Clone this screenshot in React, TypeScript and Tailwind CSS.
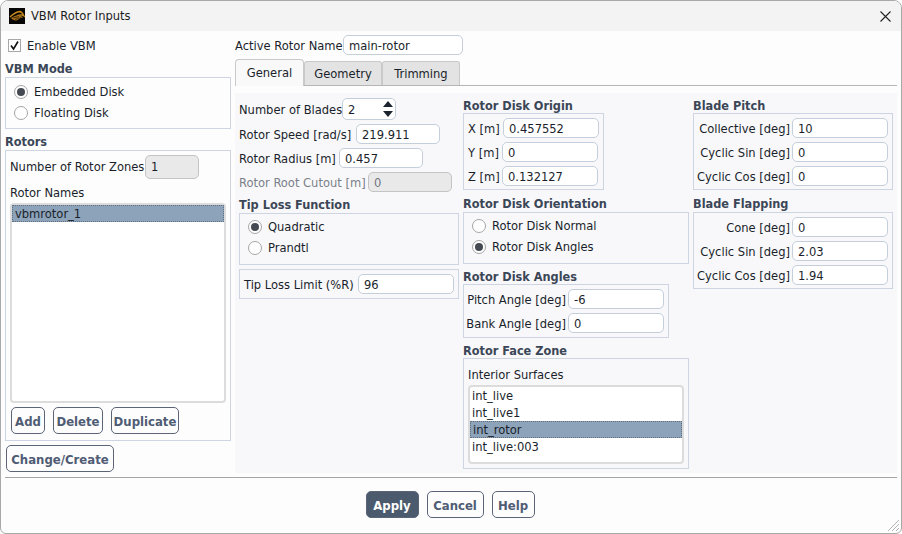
import React from "react";

const inputBase = "h-[20px] rounded-[5px] border border-[#c5cedb] bg-white pl-[5px] pt-[2px] flex items-center text-[#1a1f2b]";

function Input({ value, w = 96, disabled = false }: { value: string; w?: number; disabled?: boolean }) {
  return (
    <div
      style={{ width: w }}
      className={disabled ? "h-[20px] rounded-[5px] border border-[#c4c4c4] bg-[#e9e9e9] pl-[5px] pt-[2px] flex items-center text-[#6f7680] shrink-0" : inputBase + " shrink-0"}
    >
      {value}
    </div>
  );
}

function Heading({ children, low = false }: { children: React.ReactNode; low?: boolean }) {
  return <div className={"h-[16px] leading-[16px] text-[12.6px] font-bold text-[#3b4657] whitespace-nowrap " + (low ? "pt-[1px]" : "")}>{children}</div>;
}

function Group({ w, className = "", children }: { w: number; className?: string; children: React.ReactNode }) {
  return (
    <div style={{ width: w }} className={"border border-[#cdd5e3] " + className}>
      {children}
    </div>
  );
}

function Radio({ label, checked = false }: { label: string; checked?: boolean }) {
  return (
    <div className="flex items-center h-[21px] gap-[6px] whitespace-nowrap">
      <div className="w-[14px] h-[14px] rounded-full border border-[#a5a5a5] bg-white flex items-center justify-center shrink-0">
        {checked && <div className="w-[8px] h-[8px] rounded-full bg-[#454a52]" />}
      </div>
      <span>{label}</span>
    </div>
  );
}

function Field({ label, value }: { label: string; value: string }) {
  return (
    <div className="flex items-center justify-end h-[20px] gap-[2px] whitespace-nowrap">
      <span className="pt-[2px]">{label}</span>
      <Input value={value} />
    </div>
  );
}

function Btn({ label, w, primary = false }: { label: string; w: number; primary?: boolean }) {
  return (
    <div
      style={{ width: w }}
      className={
        "h-[27px] rounded-[5px] border border-[#5b6577] pt-[2px] flex items-center justify-center font-bold text-[13px] " +
        (primary ? "bg-[#4c5a6e] text-white" : "text-[#4f5c74]")
      }
    >
      {label}
    </div>
  );
}

function Logo() {
  return (
    <svg width="16" height="16" viewBox="0 0 16 16" className="shrink-0">
      <rect width="16" height="16" fill="#060503" />
      <path d="M1 9 C4 6 7 4 11 3.5 C13 4 14 6 15 8 C12 6 9 7 7 9" fill="none" stroke="#c98a1e" strokeWidth="1.3" />
      <path d="M2 10 C5 8 8 7 11 7 L14 9.5 C11 10 9 12 7 12.5 C5 12.5 3 11.5 2 10Z" fill="#a8701a" />
      <path d="M4 10 L10 8.5 M6 11.5 L12 9.5" stroke="#2a1a05" strokeWidth="0.8" />
    </svg>
  );
}

function Grip() {
  return (
    <svg width="14" height="14" viewBox="0 0 14 14" className="absolute right-[1px] bottom-[1px]">
      <path d="M13 2 L2 13 M13 6 L6 13 M13 10 L10 13" stroke="#b4b4b4" strokeWidth="1" fill="none" />
    </svg>
  );
}

export default function App() {
  return (
    <div
      className="relative w-[902px] h-[534px] overflow-hidden rounded-t-[8px] rounded-b-[6px] border border-[#a9a9a9] bg-[#fdfdfd] text-[12.8px] leading-[16px] text-[#1a1f2b]"
      style={{ fontFamily: '"DejaVu Sans Condensed", "DejaVu Sans", sans-serif' }}
    >
      {/* Title bar */}
      <div className="h-[30px] bg-[#f3f3f3] flex items-center pl-[8px] pr-[10px] gap-[6px]">
        <Logo />
        <span className="flex-1 text-[#1c1c1c]">VBM Rotor Inputs</span>
        <svg width="11" height="11" viewBox="0 0 11 11">
          <path d="M0.5 0.5 L10.5 10.5 M10.5 0.5 L0.5 10.5" stroke="#222" strokeWidth="1.1" fill="none" />
        </svg>
      </div>

      {/* Main */}
      <div className="flex h-[442px]">
        {/* Left column */}
        <div className="w-[230px] pl-[4px] shrink-0">
          <div className="flex items-center h-[14px] mt-[7px] ml-[3px] gap-[6px]">
            <div className="w-[13px] h-[13px] border border-[#a8a8a8] bg-white flex items-center justify-center">
              <svg width="11" height="11" viewBox="0 0 11 11">
                <path d="M2 5.5 L4.5 9 L9 1.5" stroke="#111" strokeWidth="1.6" fill="none" />
              </svg>
            </div>
            <span className="pt-[2px]">Enable VBM</span>
          </div>
          <div className="mt-[9px]"><Heading>VBM Mode</Heading></div>
          <Group w={226} className="h-[52px] pl-[8px] pt-[3px]">
            <Radio label="Embedded Disk" checked />
            <Radio label="Floating Disk" />
          </Group>
          <div className="mt-[5px]"><Heading>Rotors</Heading></div>
          <Group w={226} className="h-[291px] pl-[4px] pt-[4px]">
            <div className="flex items-center h-[24px] whitespace-nowrap">
              <span className="w-[135px]">Number of Rotor Zones</span>
              <div className="w-[54px] h-[24px] rounded-[5px] border border-[#c4c4c4] bg-[#e9e9e9] pl-[5px] flex items-center">1</div>
            </div>
            <div className="mt-[6px] h-[16px]">Rotor Names</div>
            <div className="mt-[2px] w-[216px] h-[200px] rounded-[4px] border-2 border-[#dcdcdc] bg-white">
              <div className="h-[17px] w-[212px] bg-[#8da3b9] border border-dotted border-[#5f6f80] pl-[2px] flex items-center">vbmrotor_1</div>
            </div>
            <div className="flex mt-[4px] ml-[1px]">
              <Btn label="Add" w={34} />
              <div className="ml-[8px]"><Btn label="Delete" w={50} /></div>
              <div className="ml-[8px]"><Btn label="Duplicate" w={68} /></div>
            </div>
          </Group>
          <div className="mt-[4px] ml-[1px]"><Btn label="Change/Create" w={108} /></div>
        </div>

        {/* Right column */}
        <div className="flex-1 pl-[4px]">
          <div className="flex items-center h-[20px] mt-[4px] whitespace-nowrap">
            <span className="w-[108px] pt-[2px]">Active Rotor Name</span>
            <Input value="main-rotor" w={120} />
          </div>
          <div className="flex items-end h-[27px] mt-[4px] border-b border-[#b5b5b5] w-[662px]">
            <div className="w-[69px] h-[27px] -mb-[1px] rounded-t-[4px] border border-b-0 border-[#c9c9c9] bg-[#f9f9f9] flex items-center justify-center">General</div>
            <div className="w-[78px] h-[24px] rounded-t-[3px] border border-b-0 border-[#c9c9c9] bg-[#e3e3e3] flex items-center justify-center">Geometry</div>
            <div className="w-[78px] h-[24px] rounded-t-[3px] border border-b-0 border-[#c9c9c9] bg-[#e3e3e3] flex items-center justify-center">Trimming</div>
          </div>
          <div className="mt-[7px] w-[662px] h-[380px] bg-[#f8f8fa] flex pl-[4px] gap-[4px]">
            {/* Column 1 */}
            <div className="w-[220px] shrink-0 pt-[5px]">
              <div className="flex items-center h-[22px] whitespace-nowrap">
                <span className="w-[103px] pt-[2px]">Number of Blades</span>
                <div className="w-[54px] h-[22px] rounded-[5px] border border-[#c5cedb] bg-white pl-[5px] pr-[1px] flex items-center justify-between">
                  <span className="pt-[2px]">2</span>
                  <svg width="12" height="18" viewBox="0 0 12 18">
                    <path d="M6 1 L11 7 L1 7Z M6 17 L11 11 L1 11Z" fill="#1d2430" />
                  </svg>
                </div>
              </div>
              <div className="flex items-center h-[20px] mt-[4px] whitespace-nowrap">
                <span className="w-[117px] pt-[2px]">Rotor Speed [rad/s]</span>
                <Input value="219.911" w={84} />
              </div>
              <div className="flex items-center h-[20px] mt-[4px] whitespace-nowrap">
                <span className="w-[100px] pt-[2px]">Rotor Radius [m]</span>
                <Input value="0.457" w={84} />
              </div>
              <div className="flex items-center h-[20px] mt-[4px] whitespace-nowrap text-[#7a8088]">
                <span className="w-[129px] pt-[2px]">Rotor Root Cutout [m]</span>
                <Input value="0" w={84} disabled />
              </div>
              <div className="mt-[4px]"><Heading low>Tip Loss Function</Heading></div>
              <Group w={220} className="h-[52px] pl-[8px] pt-[2px] mt-[1px]">
                <Radio label="Quadratic" checked />
                <Radio label="Prandtl" />
              </Group>
              <Group w={220} className="h-[30px] mt-[4px] pl-[4px] pr-[4px] flex items-center gap-[2px] whitespace-nowrap">
                <span className="flex-1 pt-[2px]">Tip Loss Limit (%R)</span>
                <Input value="96" />
              </Group>
            </div>

            {/* Column 2 */}
            <div className="w-[226px] shrink-0 pt-[4px]">
              <Heading low>Rotor Disk Origin</Heading>
              <Group w={141} className="h-[77px] pl-[4px] pt-[4px] flex flex-col gap-[4px]">
                <div className="flex items-center whitespace-nowrap"><span className="w-[35px] pt-[2px]">X [m]</span><Input value="0.457552" /></div>
                <div className="flex items-center whitespace-nowrap"><span className="w-[34px] pt-[2px]">Y [m]</span><Input value="0" /></div>
                <div className="flex items-center whitespace-nowrap"><span className="w-[34px] pt-[2px]">Z [m]</span><Input value="0.132127" /></div>
              </Group>
              <div className="mt-[6px]"><Heading>Rotor Disk Orientation</Heading></div>
              <Group w={226} className="h-[52px] pl-[8px] pt-[2px]">
                <Radio label="Rotor Disk Normal" />
                <Radio label="Rotor Disk Angles" checked />
              </Group>
              <div className="mt-[4px]"><Heading low>Rotor Disk Angles</Heading></div>
              <Group w={206} className="h-[54px] pl-[4px] pr-[4px] pt-[4px] flex flex-col gap-[4px]">
                <Field label="Pitch Angle [deg]" value="-6" />
                <Field label="Bank Angle [deg]" value="0" />
              </Group>
              <div className="mt-[4px]"><Heading low>Rotor Face Zone</Heading></div>
              <Group w={226} className="h-[111px] pl-[4px] pt-[8px]">
                <div className="h-[16px]">Interior Surfaces</div>
                <div className="mt-[2px] w-[216px] h-[79px] rounded-[4px] border-2 border-[#dcdcdc] bg-white">
                  <div className="h-[17px] pl-[2px] flex items-center">int_live</div>
                  <div className="h-[17px] pl-[2px] flex items-center">int_live1</div>
                  <div className="h-[17px] w-[212px] bg-[#8da3b9] border border-dotted border-[#5f6f80] pl-[2px] flex items-center">int_rotor</div>
                  <div className="h-[17px] pl-[2px] flex items-center">int_live:003</div>
                </div>
              </Group>
            </div>

            {/* Column 3 */}
            <div className="w-[200px] shrink-0 pt-[4px]">
              <Heading low>Blade Pitch</Heading>
              <Group w={200} className="h-[77px] pr-[4px] pt-[4px] flex flex-col gap-[4px]">
                <Field label="Collective [deg]" value="10" />
                <Field label="Cyclic Sin [deg]" value="0" />
                <Field label="Cyclic Cos [deg]" value="0" />
              </Group>
              <div className="mt-[6px]"><Heading>Blade Flapping</Heading></div>
              <Group w={200} className="h-[77px] pr-[4px] pt-[4px] flex flex-col gap-[4px]">
                <Field label="Cone [deg]" value="0" />
                <Field label="Cyclic Sin [deg]" value="2.03" />
                <Field label="Cyclic Cos [deg]" value="1.94" />
              </Group>
            </div>
          </div>
        </div>
      </div>

      {/* Footer */}
      <div className="mt-[4px] mx-[4px] w-[892px] border-t border-[#a5a5a5] pt-[13px] pr-[2px] flex justify-center gap-[8px]">
        <Btn label="Apply" w={53} primary />
        <Btn label="Cancel" w={57} />
        <Btn label="Help" w={43} />
      </div>
      <Grip />
    </div>
  );
}
